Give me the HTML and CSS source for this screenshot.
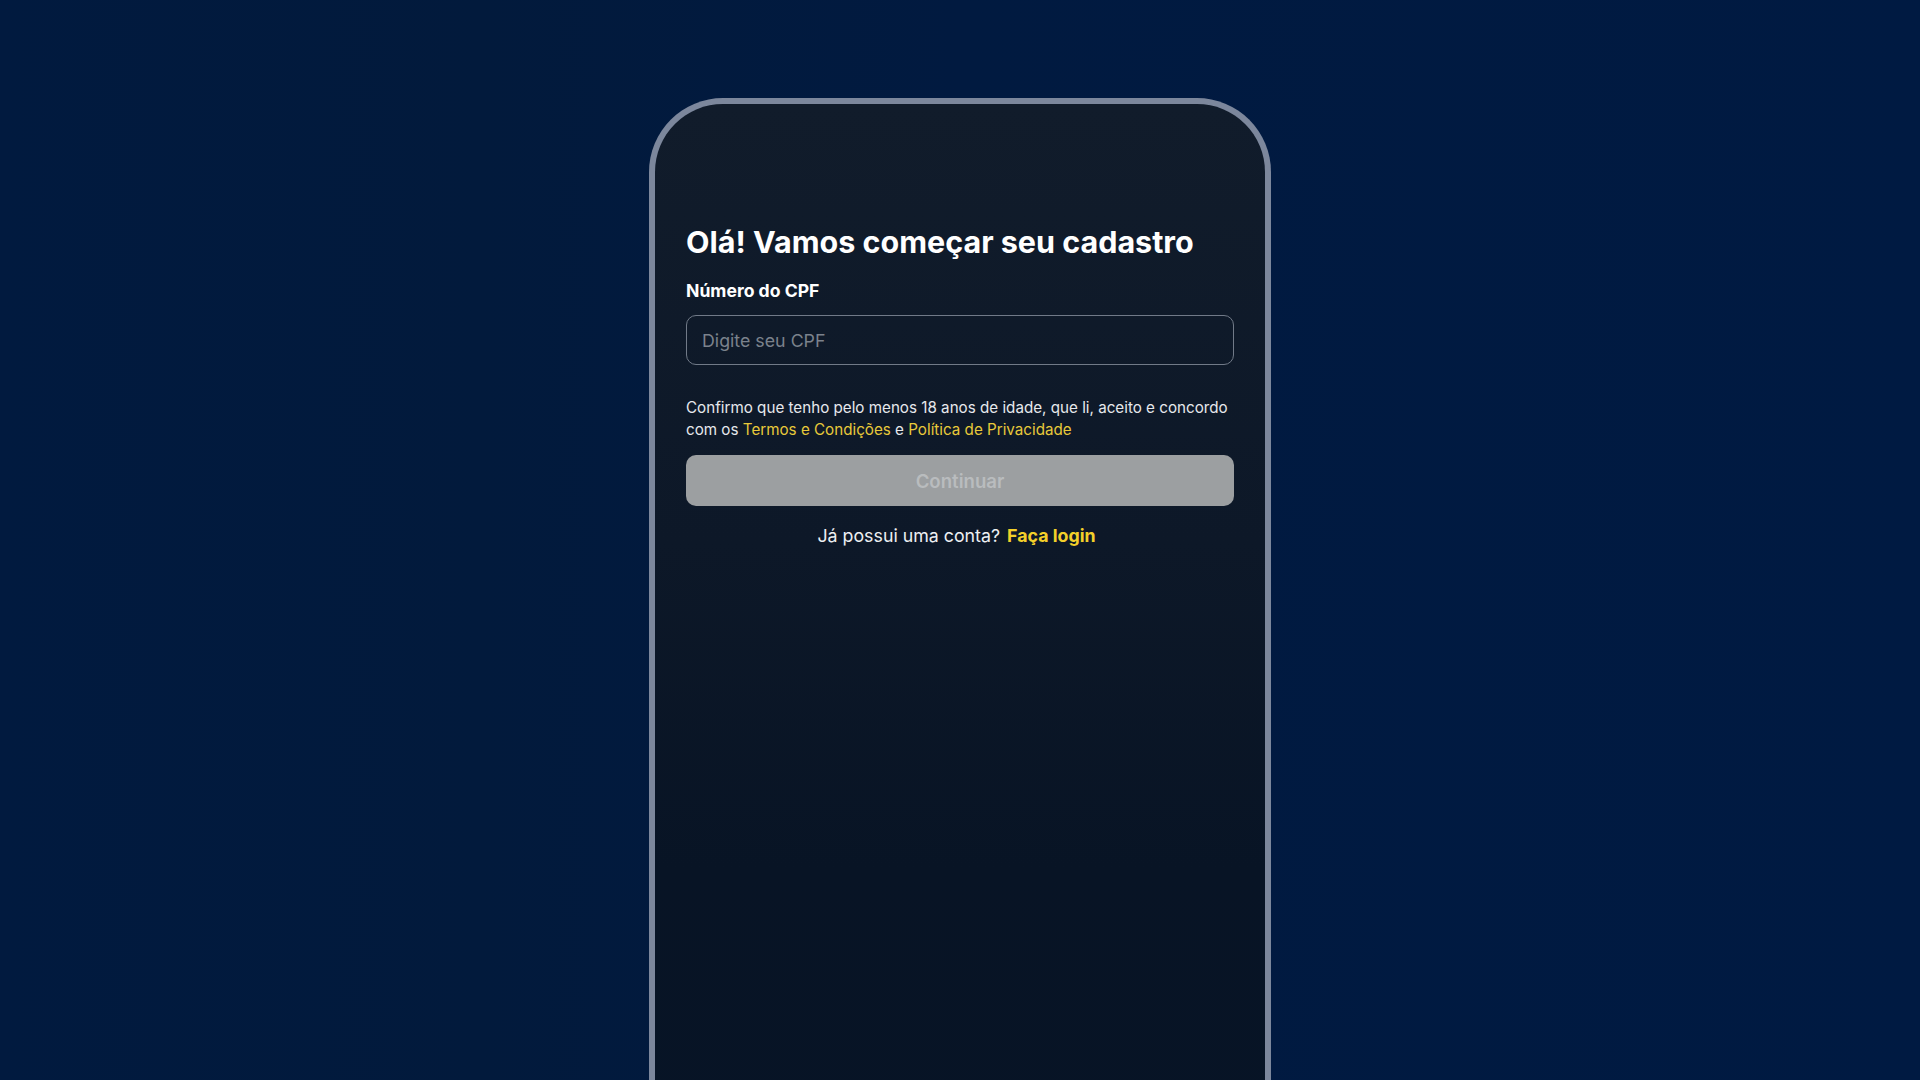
FILE: index.html
```html
<!DOCTYPE html>
<html lang="pt-BR">
<head>
<meta charset="utf-8">
<title>Cadastro</title>
<link rel="stylesheet" href="styles.css">
</head>
<body>
<div class="stage">
  <div class="phone">
    <div class="screen">
      <h1 class="title">Olá! Vamos começar seu cadastro</h1>
      <label class="label" for="cpf">Número do CPF</label>
      <input class="input" id="cpf" type="text" placeholder="Digite seu CPF">
      <p class="terms">Confirmo que tenho pelo menos 18 anos de idade, que li, aceito e concordo com os <a class="link" href="#">Termos e Condições</a> e <a class="link" href="#">Política de Privacidade</a></p>
      <button class="btn" type="button" disabled>Continuar</button>
      <div class="login">
        <span class="login-text">Já possui uma conta?</span>
        <a class="login-link" href="#">Faça login</a>
      </div>
    </div>
  </div>
</div>
</body>
</html>
```
FILE: styles.css
```css
* { box-sizing: border-box; }
html, body {
  margin: 0;
  padding: 0;
  height: 100%;
  overflow: hidden;
  background: #011a40;
  font-family: "Inter", "Noto Sans", sans-serif;
}
.stage {
  display: flex;
  justify-content: center;
  padding-top: 98px;
  height: 100%;
  background: linear-gradient(90deg, #011a3f 0%, #021a3c 25%, #011a40 50%, #001a42 100%);
}
.phone {
  width: 622px;
  height: 1100px;
  border: 6px solid #7c879c;
  border-bottom: none;
  border-radius: 74px 74px 0 0;
  background: linear-gradient(180deg, #111c2b 0%, #0d1828 40%, #081425 70%, #071426 100%);
  overflow: hidden;
}
.screen {
  display: flex;
  flex-direction: column;
  padding: 121px 31px 0;
}
.title {
  margin: 0;
  font-size: 30.5px;
  line-height: 34px;
  font-weight: 700;
  color: #ffffff;
}
.label {
  margin-top: 20px;
  font-size: 17.6px;
  line-height: 24px;
  font-weight: 700;
  color: #ffffff;
}
.input {
  margin-top: 12px;
  height: 50px;
  width: 100%;
  border: 1px solid #717a88;
  border-radius: 10px;
  background: transparent;
  padding: 0 15px;
  font-family: "Inter", "Noto Sans", sans-serif;
  font-size: 17.8px;
  color: #ffffff;
  outline: none;
}
.input::placeholder { color: #7b828c; }
.terms {
  margin: 32px 0 0;
  font-size: 15.2px;
  line-height: 22px;
  color: #e6e8ec;
}
.link {
  color: #e8c93a;
  text-decoration: none;
}
.btn {
  margin-top: 14px;
  height: 51px;
  width: 100%;
  border: none;
  border-radius: 10px;
  background: #9c9fa1;
  color: #b9bcbe;
  font-family: "Inter", "Noto Sans", sans-serif;
  font-size: 18.6px;
  font-weight: 600;
}
.login {
  margin-top: 18px;
  padding-right: 7px;
  display: flex;
  justify-content: center;
  align-items: baseline;
  gap: 7px;
  line-height: 24px;
}
.login-text {
  font-size: 17.8px;
  color: #eef0f3;
}
.login-link {
  font-size: 17.8px;
  font-weight: 700;
  color: #f3d02a;
  text-decoration: none;
}
```
